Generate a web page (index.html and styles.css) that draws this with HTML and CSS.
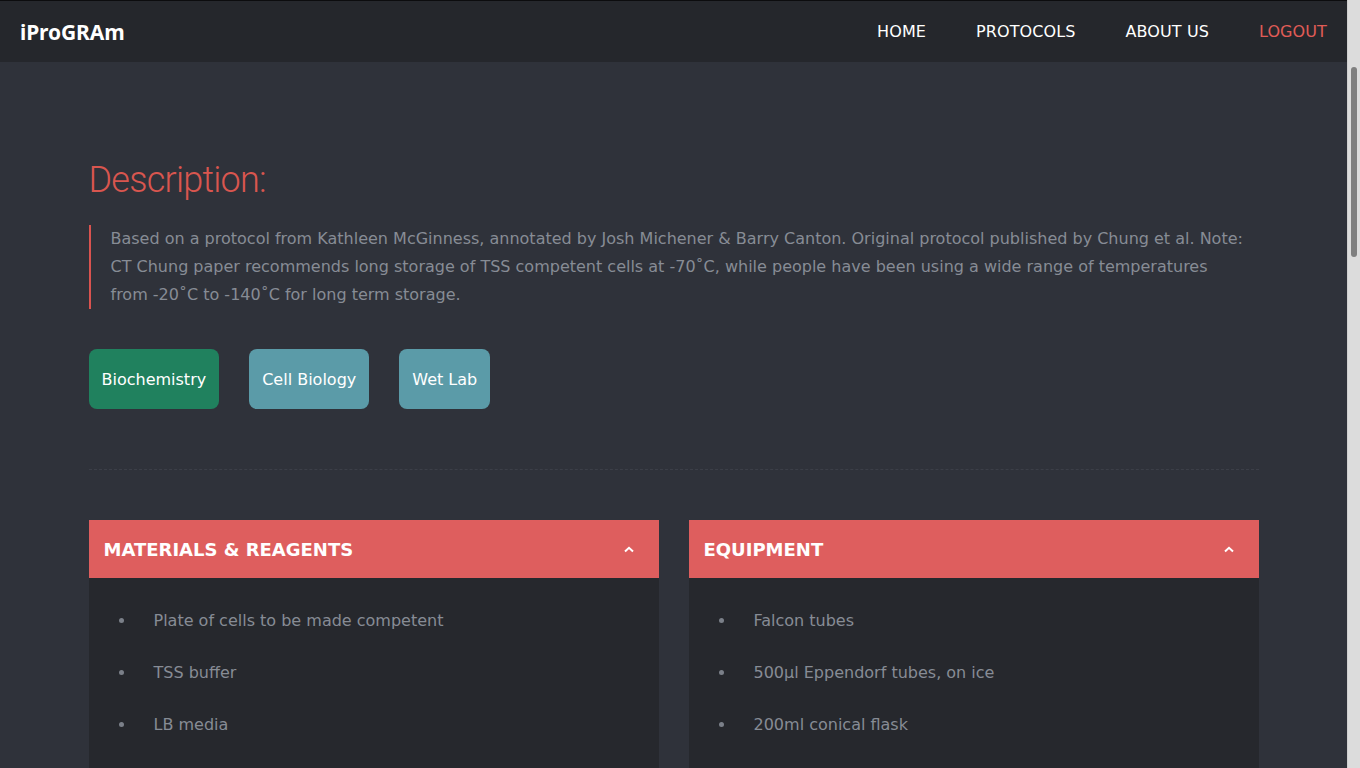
FILE: index.html
```html
<!DOCTYPE html>
<html lang="en">
<head>
<meta charset="utf-8">
<title>iProGRAm - Protocol</title>
<link rel="stylesheet" href="styles.css">
</head>
<body>
<div class="page">
  <header class="topbar">
    <div class="logo">iProGRAm</div>
    <nav class="nav">
      <a class="nav-link" href="#">HOME</a>
      <a class="nav-link" href="#">PROTOCOLS</a>
      <a class="nav-link" href="#">ABOUT US</a>
      <a class="nav-link nav-logout" href="#">LOGOUT</a>
    </nav>
  </header>

  <main class="container">
    <h2 class="section-title">Description:</h2>
    <blockquote class="desc">
      Based on a protocol from Kathleen McGinness, annotated by Josh Michener &amp; Barry Canton. Original protocol published by Chung et al. Note: CT Chung paper recommends long storage of TSS competent cells at -70˚C, while people have been using a wide range of temperatures from -20˚C to -140˚C for long term storage.
    </blockquote>

    <div class="tags">
      <span class="tag tag-green">Biochemistry</span>
      <span class="tag tag-teal">Cell Biology</span>
      <span class="tag tag-teal">Wet Lab</span>
    </div>

    <hr class="divider">

    <div class="panels">
      <section class="panel">
        <div class="panel-head">
          <span class="panel-title">MATERIALS &amp; REAGENTS</span>
          <svg class="chev" width="10" height="7" viewBox="0 0 10 7"><path d="M1 5.5 L5 1.8 L9 5.5" fill="none" stroke="#fff" stroke-width="2"/></svg>
        </div>
        <ul class="items">
          <li>Plate of cells to be made competent</li>
          <li>TSS buffer</li>
          <li>LB media</li>
          <li>Ice</li>
        </ul>
      </section>
      <section class="panel">
        <div class="panel-head">
          <span class="panel-title">EQUIPMENT</span>
          <svg class="chev" width="10" height="7" viewBox="0 0 10 7"><path d="M1 5.5 L5 1.8 L9 5.5" fill="none" stroke="#fff" stroke-width="2"/></svg>
        </div>
        <ul class="items">
          <li>Falcon tubes</li>
          <li>500µl Eppendorf tubes, on ice</li>
          <li>200ml conical flask</li>
          <li>Spectrophotometer</li>
        </ul>
      </section>
    </div>
  </main>
</div>

<div class="scrollbar" aria-hidden="true"><div class="scroll-thumb"></div></div>
</body>
</html>
```

FILE: styles.css
```css
html, body {
  margin: 0;
  padding: 0;
}
html {
  overflow: hidden;
  height: 100%;
}
body {
  height: 100%;
  overflow: hidden;
  background: #2f323a;
  font-family: "DejaVu Sans", sans-serif;
  color: #8a8f98;
}
.page {
  margin-right: 13px;
}
.scrollbar {
  position: fixed;
  top: 0;
  right: 0;
  bottom: 0;
  width: 13px;
  background: #dcdcdc;
  border-left: 1px solid #cfcfcf;
  box-sizing: border-box;
}
.scroll-thumb {
  position: absolute;
  top: 67px;
  left: 3px;
  width: 6px;
  height: 190px;
  border-radius: 3px;
  background: #7f7f7f;
}
.topbar {
  height: 61px;
  border-top: 1px solid #0c0c0e;
  background: #25272c;
  display: flex;
  align-items: center;
  justify-content: space-between;
  padding: 0 20px;
}
.logo {
  font-family: "Noto Sans", sans-serif;
  font-weight: 700;
  font-size: 21px;
  letter-spacing: -0.1px;
  color: #ffffff;
}
.nav {
  display: flex;
  gap: 50px;
}
.nav-link {
  font-size: 16px;
  color: #ffffff;
  text-decoration: none;
  letter-spacing: 0.1px;
}
.nav-logout {
  color: #e05c57;
}
.container {
  width: 1170px;
  margin: 0 auto;
  padding-top: 90px;
}
.section-title {
  margin: 0;
  font-family: Roboto, sans-serif;
  font-weight: 300;
  font-size: 36px;
  line-height: 56px;
  color: #d9564f;
  letter-spacing: -0.75px;
}
.desc {
  margin: 17px 0 0 0;
  border-left: 2px solid #d9534f;
  padding: 0 15px 0 20px;
  font-size: 16px;
  line-height: 28px;
  color: #878c95;
}
.tags {
  display: flex;
  gap: 30px;
  margin-top: 40px;
}
.tag {
  display: block;
  padding: 0 13px;
  height: 60px;
  line-height: 61px;
  border-radius: 8px;
  font-size: 16px;
  color: #ffffff;
}
.tag-green {
  background: #20815e;
}
.tag-teal {
  background: #5b9ba8;
}
.divider {
  margin: 60px 0 0 0;
  border: 0;
  border-top: 1px dashed #3c3f48;
  height: 0;
}
.panels {
  display: grid;
  grid-template-columns: 1fr 1fr;
  gap: 30px;
  margin-top: 50px;
}
.panel {
  background: #26282d;
}
.panel-head {
  height: 58px;
  background: #de5e5e;
  display: flex;
  align-items: center;
  justify-content: space-between;
  padding: 0 25px 0 15px;
}
.panel-title {
  font-size: 18px;
  font-weight: 700;
  color: #ffffff;
}
.chev {
  display: block;
}
.items {
  list-style: none;
  margin: 0;
  padding: 16px 0 24px 0;
}
.items li {
  display: flex;
  align-items: center;
  height: 52px;
  padding-left: 30px;
  font-size: 16px;
  color: #878c95;
}
.items li::before {
  content: "";
  width: 5px;
  height: 5px;
  border-radius: 50%;
  background: #7b8089;
  margin-right: 30px;
}
```
